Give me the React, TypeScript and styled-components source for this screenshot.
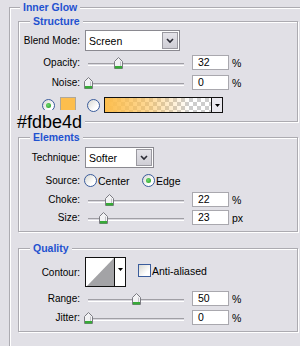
import React from "react";
import styled, { createGlobalStyle } from "styled-components";

const BG = "#e1e0e6";
const LINE = "#acabb1";

const GlobalStyle = createGlobalStyle`
  html, body { margin: 0; padding: 0; background: ${BG}; }
  body { font-family: "Liberation Sans", Arial, sans-serif; font-size: 10px; color: #000; }
  * { box-sizing: border-box; }
`;

const Page = styled.div`
  position: relative;
  width: 300px;
  height: 346px;
  overflow: hidden;
  background: ${BG};
  padding: 7px 0 0 9px;
`;

const OuterGroup = styled.section`
  display: flex;
  flex-direction: column;
  width: 330px;
  height: 400px;
  border: 1px solid ${LINE};
  box-shadow: inset 1px 1px 0 #fff;
  padding-left: 8px;
`;

const InnerGroup = styled.section<{ $mt: number; $pb: number }>`
  display: flex;
  flex-direction: column;
  width: 280px;
  margin-top: ${(p) => p.$mt}px;
  padding-bottom: ${(p) => p.$pb}px;
  border: 1px solid ${LINE};
  box-shadow: inset 1px 1px 0 #fff, 1px 1px 0 #fff;
`;

const GroupTitle = styled.div<{ $indent: number }>`
  align-self: flex-start;
  height: 13px;
  line-height: 13px;
  margin-top: -7px;
  margin-left: ${(p) => p.$indent}px;
  padding: 0 3px;
  background: ${BG};
  color: #1f52d0;
  font-weight: bold;
  font-size: 10.5px;
`;

const Row = styled.div<{ $h: number; $mt: number }>`
  display: flex;
  align-items: center;
  height: ${(p) => p.$h}px;
  margin-top: ${(p) => p.$mt}px;
`;

const Label = styled.span`
  flex: none;
  width: 61px;
  margin-right: 4px;
  text-align: right;
  white-space: nowrap;
`;

const Select = styled.div<{ $w: number }>`
  display: flex;
  align-items: stretch;
  flex: none;
  width: ${(p) => p.$w}px;
  height: 21px;
  margin-left: 1px;
  background: #fff;
  border: 1px solid #8a8990;
  padding: 1px;
`;

const SelectValue = styled.span`
  flex: 1;
  display: flex;
  align-items: center;
  padding-left: 2px;
  font-size: 10.5px;
`;

const SelectArrow = styled.span`
  flex: none;
  width: 16px;
  display: flex;
  align-items: center;
  justify-content: center;
  background: linear-gradient(#e4e3e9, #cfced5);
  border: 1px solid #9a99a0;
`;

const SliderBox = styled.div`
  position: relative;
  flex: none;
  width: 104px;
  height: 15px;
`;

const Track = styled.div`
  margin: 8px 4px 0;
  height: 3px;
  border-top: 1px solid #a09fa5;
  border-bottom: 1px solid #fff;
  background: #d9d8de;
`;

const Thumb = styled.svg<{ $pos: number }>`
  position: absolute;
  top: 2px;
  left: ${(p) => (p.$pos * 96 - 0.5).toFixed(1)}px;
`;

const NumberBox = styled.div`
  flex: none;
  width: 37px;
  height: 15px;
  margin-left: 4px;
  padding-left: 5px;
  line-height: 13px;
  background: #fff;
  border: 1px solid #a9a8ae;
  font-size: 10.5px;
`;

const Unit = styled.span`
  margin-left: 3px;
  font-size: 10.5px;
`;

const Radio = styled.span<{ $checked?: boolean; $ml: number }>`
  position: relative;
  flex: none;
  width: 13px;
  height: 13px;
  margin-left: ${(p) => p.$ml}px;
  border-radius: 50%;
  border: 1px solid #3a5c9c;
  background: linear-gradient(135deg, #d8d8d2, #ffffff 70%);
  &::after {
    content: "";
    display: ${(p) => (p.$checked ? "block" : "none")};
    position: absolute;
    left: 3px;
    top: 3px;
    width: 5px;
    height: 5px;
    border-radius: 50%;
    background: radial-gradient(circle at 40% 40%, #6fd86f, #1d9a1d);
  }
`;

const RadioText = styled.span<{ $w: number }>`
  flex: none;
  width: ${(p) => p.$w}px;
  margin-left: 1px;
  font-size: 10.5px;
`;

const Swatch = styled.span`
  flex: none;
  width: 16px;
  height: 16px;
  margin-left: 5px;
  background: #fdbe4d;
  border: 1px solid #b0a89a;
`;

const GradientPicker = styled.div`
  display: flex;
  flex: none;
  width: 119px;
  height: 16px;
  margin-left: 4px;
  border: 1px solid #111;
`;

const GradientFill = styled.div`
  flex: 1;
  background-image: linear-gradient(to right, #fdbe4d 0%, rgba(253, 190, 77, 0.6) 40%, rgba(253, 190, 77, 0) 80%),
    conic-gradient(#cdcdcd 25%, #ffffff 0 50%, #cdcdcd 0 75%, #ffffff 0);
  background-size: 100% 100%, 8px 8px;
`;

const PickerArrow = styled.div`
  flex: none;
  width: 11px;
  display: flex;
  align-items: center;
  justify-content: center;
  border-left: 1px solid #111;
  background: #e9e8ee;
`;

const ContourPicker = styled.div`
  display: flex;
  flex: none;
  width: 41px;
  height: 30px;
  margin-left: 1px;
  border: 1px solid #111;
  background: #fff;
`;

const ContourPreview = styled.svg`
  flex: none;
  display: block;
`;

const ContourArrow = styled.div`
  flex: none;
  width: 11px;
  display: flex;
  justify-content: center;
  padding-top: 10px;
  border-left: 1px solid #111;
  background: #fff;
`;

const Checkbox = styled.span`
  flex: none;
  width: 13px;
  height: 13px;
  margin-left: 12px;
  margin-top: -3px;
  border: 1px solid #3a5c9c;
  background: linear-gradient(135deg, #d8d8d2, #ffffff 70%);
`;

const CheckText = styled.span`
  margin-left: 1px;
  margin-top: -3px;
  font-size: 10.5px;
`;

const HexNote = styled.div`
  position: absolute;
  left: 13px;
  top: 110px;
  padding: 2px 3px 1px 4px;
  background: ${BG};
  font-family: "Liberation Sans", Arial, sans-serif;
  font-size: 18px;
  line-height: 20px;
  color: #000;
`;

const Chevron = () => (
  <svg width="8" height="6" viewBox="0 0 8 6">
    <polyline points="1,1 4,4 7,1" fill="none" stroke="#2b2b35" strokeWidth="1.6" />
  </svg>
);

const DownTriangle = () => (
  <svg width="5" height="3" viewBox="0 0 5 3">
    <polygon points="0,0 5,0 2.5,3" fill="#000" />
  </svg>
);

const Slider = ({ pos }: { pos: number }) => (
  <SliderBox>
    <Track />
    <Thumb $pos={pos} width="9" height="12" viewBox="0 0 9 12">
      <path d="M0.5 11.5V4.5L4.5 0.5L8.5 4.5V11.5Z" fill="#f2f2f4" stroke="#7b7b82" />
      <path d="M6.5 4.5V9" stroke="#c2c2c8" />
      <rect x="1" y="9" width="7" height="2.5" fill="#37aa37" />
    </Thumb>
  </SliderBox>
);

type SliderRowProps = { label: string; pos: number; value: string; unit: string; mt: number };

const SliderRow = ({ label, pos, value, unit, mt }: SliderRowProps) => (
  <Row $h={15} $mt={mt}>
    <Label>{label}</Label>
    <Slider pos={pos} />
    <NumberBox>{value}</NumberBox>
    <Unit>{unit}</Unit>
  </Row>
);

export default function App() {
  return (
    <Page>
      <GlobalStyle />
      <OuterGroup>
        <GroupTitle $indent={2}>Inner Glow</GroupTitle>

        <InnerGroup $mt={7} $pb={8}>
          <GroupTitle $indent={11}>Structure</GroupTitle>
          <Row $h={21} $mt={2}>
            <Label>Blend Mode:</Label>
            <Select $w={95}>
              <SelectValue>Screen</SelectValue>
              <SelectArrow>
                <Chevron />
              </SelectArrow>
            </Select>
          </Row>
          <SliderRow label="Opacity:" pos={0.32} value="32" unit="%" mt={4} />
          <SliderRow label="Noise:" pos={0} value="0" unit="%" mt={5} />
          <Row $h={16} $mt={7}>
            <Radio $checked $ml={23} />
            <Swatch />
            <Radio $ml={11} />
            <GradientPicker>
              <GradientFill />
              <PickerArrow>
                <DownTriangle />
              </PickerArrow>
            </GradientPicker>
          </Row>
        </InnerGroup>

        <InnerGroup $mt={15} $pb={6}>
          <GroupTitle $indent={11}>Elements</GroupTitle>
          <Row $h={21} $mt={3}>
            <Label>Technique:</Label>
            <Select $w={69}>
              <SelectValue>Softer</SelectValue>
              <SelectArrow>
                <Chevron />
              </SelectArrow>
            </Select>
          </Row>
          <Row $h={13} $mt={6}>
            <Label>Source:</Label>
            <Radio $ml={0} />
            <RadioText $w={44}>Center</RadioText>
            <Radio $checked $ml={0} />
            <RadioText $w={40}>Edge</RadioText>
          </Row>
          <SliderRow label="Choke:" pos={0.22} value="22" unit="%" mt={5} />
          <SliderRow label="Size:" pos={0.156} value="23" unit="px" mt={3} />
        </InnerGroup>

        <InnerGroup $mt={16} $pb={6}>
          <GroupTitle $indent={11}>Quality</GroupTitle>
          <Row $h={30} $mt={2}>
            <Label>Contour:</Label>
            <ContourPicker>
              <ContourPreview width="28" height="28" viewBox="0 0 28 28">
                <polygon points="1,28 28,0 28,28" fill="#a3a3a6" />
              </ContourPreview>
              <ContourArrow>
                <DownTriangle />
              </ContourArrow>
            </ContourPicker>
            <Checkbox />
            <CheckText>Anti-aliased</CheckText>
          </Row>
          <SliderRow label="Range:" pos={0.5} value="50" unit="%" mt={4} />
          <SliderRow label="Jitter:" pos={0} value="0" unit="%" mt={4} />
        </InnerGroup>
      </OuterGroup>
      <HexNote>#fdbe4d</HexNote>
    </Page>
  );
}
